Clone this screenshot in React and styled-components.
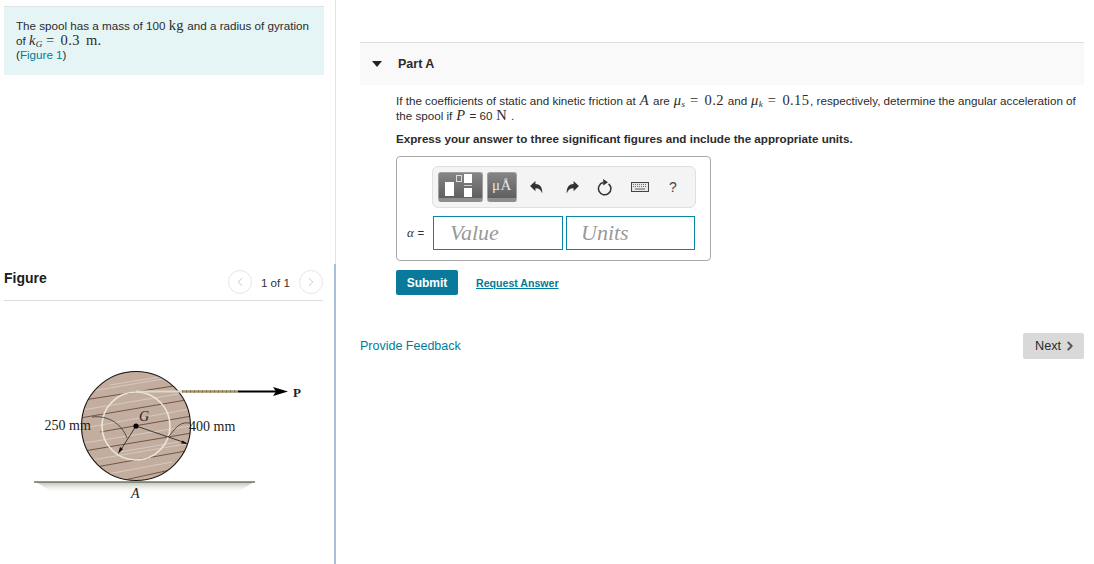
import React from "react";
import styled, { createGlobalStyle } from "styled-components";
import { ChevronLeft, ChevronRight } from "lucide-react";

const GlobalStyle = createGlobalStyle`
  html, body {
    margin: 0;
    padding: 0;
    background: #fff;
  }
  body {
    font-family: "Liberation Sans", Arial, sans-serif;
    color: #222;
  }
`;

const teal = "#007c9b";

const Page = styled.div`
  display: flex;
  width: 1094px;
  height: 564px;
  overflow: hidden;
`;

const LeftColumn = styled.div`
  width: 336px;
  display: flex;
  flex-direction: column;
`;

const IntroPane = styled.div`
  height: 264px;
  box-sizing: border-box;
  padding: 6px 11px 0 4px;
  border-right: 1px solid #dfe5ee;
`;

const Callout = styled.div`
  height: 69px;
  box-sizing: border-box;
  padding: 12px 12px 0;
  background: #e5f5f6;
  border-top: 1px solid #dde3e8;
  font-size: 11.65px;
  line-height: 14.5px;
  color: #2b2b2b;
  white-space: nowrap;
`;

const Link = styled.a`
  color: ${teal};
`;

const Math = styled.span`
  font-family: "Liberation Serif", "Times New Roman", serif;
  font-size: ${(p) => p.$size || 14.5}px;
  font-style: ${(p) => (p.$italic ? "italic" : "normal")};
  line-height: 0;
  letter-spacing: 0.4px;
  word-spacing: 2px;
  white-space: nowrap;
`;

const Sub = styled.span`
  font-size: 9px;
  font-style: italic;
  line-height: 0;
  vertical-align: -2px;
`;

const FigurePane = styled.div`
  flex: 1;
  padding: 0 11px 0 4px;
  border-right: 2px solid #a9bfd6;
`;

const FigureHeader = styled.div`
  height: 36px;
  display: flex;
  align-items: center;
  justify-content: space-between;
  border-bottom: 1px solid #d9dee3;
`;

const FigureTitle = styled.div`
  font-size: 14px;
  font-weight: bold;
  color: #1c1c1c;
  margin-top: -9px;
`;

const Pager = styled.div`
  display: flex;
  align-items: center;
  gap: 9px;
  font-size: 11.65px;
  color: #333;
`;

const PagerButton = styled.span`
  width: 22px;
  height: 22px;
  display: flex;
  align-items: center;
  justify-content: center;
  border: 1px solid #e6e6e6;
  border-radius: 50%;
  color: #b0b0b0;
`;

const Diagram = styled.svg`
  display: block;
  margin: 59px 0 0 16px;
`;

const RightColumn = styled.div`
  flex: 1;
  padding: 42px 10px 0 24px;
`;

const PartHeader = styled.div`
  height: 43px;
  box-sizing: border-box;
  display: flex;
  align-items: center;
  gap: 16px;
  padding: 0 0 1px 12px;
  background: #f9f9f9;
  border-top: 1px solid #dedede;
`;

const Caret = styled.span`
  width: 0;
  height: 0;
  border-left: 5px solid transparent;
  border-right: 5px solid transparent;
  border-top: 6px solid #222;
`;

const PartTitle = styled.div`
  font-size: 12.5px;
  font-weight: bold;
  color: #2a2a2a;
`;

const PartBody = styled.div`
  padding: 9px 0 0 36px;
`;

const Question = styled.p`
  margin: 0;
  font-size: 11.65px;
  line-height: 14.5px;
  color: #2b2b2b;
  white-space: nowrap;

  ${Math} {
    margin: 0 0.7px;
  }
`;

const Instruction = styled.p`
  margin: 9px 0 0;
  font-size: 11.65px;
  line-height: 14px;
  font-weight: bold;
  color: #2b2b2b;
`;

const AnswerBox = styled.div`
  width: 315px;
  height: 105px;
  box-sizing: border-box;
  margin-top: 10px;
  padding: 9px 10px 0 10px;
  border: 1px solid #aaa;
  border-radius: 4px;
`;

const Toolbar = styled.div`
  width: 264px;
  height: 42px;
  box-sizing: border-box;
  margin-left: 25px;
  padding: 5px 0 0 5px;
  display: flex;
  background: #f4f4f4;
  border: 1px solid #e0e0e0;
  border-radius: 6px;
`;

const ToolButton = styled.div`
  width: ${(p) => p.$width}px;
  height: 30px;
  margin-right: 4px;
  display: flex;
  align-items: center;
  justify-content: center;
  box-sizing: border-box;
  border: 1px solid #a0a0a0;
  border-bottom: 4px solid #8e8e8e;
  border-radius: 3px;
  background: linear-gradient(#858585, #5f5f5f);
  color: #e6e6e6;
  font-family: "Liberation Serif", serif;
  font-size: 15px;
  letter-spacing: 0.6px;
`;

const ToolIcon = styled.div`
  width: ${(p) => p.$width || 34}px;
  height: 30px;
  display: flex;
  align-items: center;
  justify-content: center;
  color: #444;
  font-size: 14px;
`;

const InputRow = styled.div`
  display: flex;
  align-items: center;
  gap: 3px;
  margin-top: 8px;
`;

const InputLabel = styled.div`
  flex: none;
  width: 23px;
  font-size: 11.5px;
  color: #333;
`;

const AnswerInput = styled.input`
  flex: none;
  width: ${(p) => p.$width}px;
  height: 34px;
  box-sizing: border-box;
  padding: 0 0 0 ${(p) => p.$pad}px;
  border: 1px solid #0a84a5;
  border-radius: 0;
  outline: none;
  font-family: "Liberation Serif", serif;
  font-style: italic;
  font-size: 22px;

  &::placeholder {
    color: #999;
    opacity: 1;
  }
`;

const Actions = styled.div`
  display: flex;
  align-items: center;
  gap: 18px;
  margin-top: 9px;
`;

const SubmitButton = styled.button`
  width: 62px;
  height: 25px;
  padding: 0;
  border: none;
  border-radius: 2px;
  background: #0a7a9c;
  color: #fff;
  font-family: inherit;
  font-size: 12px;
  font-weight: bold;
`;

const RequestLink = styled.a`
  color: ${teal};
  font-size: 10.6px;
  font-weight: bold;
  text-decoration: underline;
`;

const FooterRow = styled.div`
  display: flex;
  align-items: center;
  justify-content: space-between;
  margin-top: 38px;
`;

const FeedbackLink = styled.a`
  color: ${teal};
  font-size: 12.5px;
`;

const NextButton = styled.div`
  width: 61px;
  height: 26px;
  box-sizing: border-box;
  padding-left: 12px;
  display: flex;
  align-items: center;
  gap: 2px;
  background: #d9d9d9;
  border-radius: 2px;
  color: #2a2a2a;
  font-size: 12.7px;
`;

const SpoolDiagram = () => (
  <Diagram width="290" height="150" viewBox="20 360 290 150">
    <defs>
      <clipPath id="wheel">
        <circle cx="136" cy="426" r="54.5" />
      </clipPath>
      <linearGradient id="shadow" x1="0" y1="0" x2="0" y2="1">
        <stop offset="0" stopColor="#a3aa98" stopOpacity="0.75" />
        <stop offset="1" stopColor="#e6e9e0" stopOpacity="0" />
      </linearGradient>
    </defs>

    <path d="M36 482 H254 L238 492 H52 Z" fill="url(#shadow)" />
    <circle cx="136" cy="426" r="54.5" fill="#c4ad9f" />

    <g clipPath="url(#wheel)">
      <g stroke="#dbcec4" strokeWidth="1.2" fill="none" opacity="0.85">
        <path d="M86 392 L180 376" />
        <path d="M82 410 L190 392" />
        <path d="M84 428 L190 409" />
        <path d="M84 443 L190 426" />
        <path d="M92 460 L186 444" />
        <path d="M108 474 L172 462" />
        <path d="M110 385 L165 376" />
        <path d="M120 452 L178 442" />
      </g>
      <g stroke="#5a3f30" strokeWidth="0.8" fill="none">
        <path d="M100 377 L156 367" />
        <path d="M84 400 L186 384" />
        <path d="M80 418 L192 399" />
        <path d="M100 432 L192 416" />
        <path d="M84 451 L192 433" />
        <path d="M96 467 L186 451" />
        <path d="M120 481 L170 470" />
      </g>
    </g>

    <circle cx="136" cy="426" r="54.5" fill="none" stroke="#1d1713" strokeWidth="1.1" />
    <circle cx="136" cy="426" r="34" fill="none" stroke="#ebe8da" strokeWidth="1.6" />

    <path d="M136 391.5 H182" stroke="#ded9c8" strokeWidth="2" />
    <path d="M182 391.5 H238" stroke="#a2966c" strokeWidth="2.4" />
    <path d="M182 391.5 H238" stroke="#6c6140" strokeWidth="2.4" strokeDasharray="1 3" opacity="0.6" />
    <path d="M238 391.5 H277" stroke="#000" strokeWidth="1.8" />
    <path d="M288 391.5 L273 387 L276 391.5 L273 396 Z" fill="#000" />

    <path d="M92 417 C108 415 122 424 127 438" fill="none" stroke="#222" strokeWidth="0.7" />
    <path d="M190 423 C177 421 174 432 168 437" fill="none" stroke="#222" strokeWidth="0.7" />
    <path d="M136 426 L120 451" stroke="#1a1a1a" strokeWidth="0.8" />
    <path d="M118 454 L120 447 L123 449 Z" fill="#111" />
    <path d="M136 426 L186 443" stroke="#1a1a1a" strokeWidth="0.8" />
    <path d="M188 444 L181 443.5 L182.5 440.5 Z" fill="#111" />
    <circle cx="136" cy="426" r="2.6" fill="#000" />

    <path d="M34 482 H255" stroke="#6e7464" strokeWidth="1.6" />

    <g fontFamily="'Liberation Serif', serif" fill="#222">
      <text x="44.5" y="430" fontSize="14">250 mm</text>
      <text x="189" y="431" fontSize="14">400 mm</text>
      <text x="139" y="421" fontSize="14" fontStyle="italic">G</text>
      <text x="131" y="498" fontSize="14" fontStyle="italic">A</text>
      <text x="293" y="397" fontSize="13" fontWeight="bold">P</text>
    </g>
  </Diagram>
);

const TemplateIcon = () => (
  <svg width="36" height="24" viewBox="0 0 36 24">
    <rect x="2" y="8" width="9" height="14" fill="#fff" />
    <rect x="13.5" y="1.5" width="5" height="6" fill="none" stroke="#ddd" />
    <rect x="21" y="0" width="8" height="9" fill="#fff" />
    <rect x="21" y="11" width="8" height="1" fill="#ccc" />
    <rect x="21" y="14" width="8" height="9" fill="#fff" />
  </svg>
);

const UndoIcon = () => (
  <svg width="15" height="15" viewBox="0 0 14 14">
    <path d="M1 5.5 L6 1 V3.8 C10 3.8 12.6 6.4 12.4 12.6 C11.2 9.4 9.4 7.8 6 7.8 V10.4 Z" fill="#333" />
  </svg>
);

const RedoIcon = () => (
  <svg width="15" height="15" viewBox="0 0 14 14">
    <path d="M13 5.5 L8 1 V3.8 C4 3.8 1.4 6.4 1.6 12.6 C2.8 9.4 4.6 7.8 8 7.8 V10.4 Z" fill="#333" />
  </svg>
);

const ResetIcon = () => (
  <svg width="16" height="18" viewBox="0 0 16 18">
    <path d="M11.6 5.8 A6.2 6.2 0 1 1 6.2 4.6" fill="none" stroke="#333" strokeWidth="1.5" />
    <path d="M6.2 1 L11 4.2 L6.2 7.4 Z" fill="#333" />
  </svg>
);

const KeyboardIcon = () => (
  <svg width="18" height="10" viewBox="0 0 18 10">
    <rect x="0.5" y="0.5" width="17" height="9" fill="#e8e8e8" stroke="#444" />
    <path d="M2 2.5 H16 M2 4.5 H16" stroke="#777" strokeWidth="1" strokeDasharray="1 1" />
    <path d="M4 7 H14" stroke="#777" strokeWidth="1.2" />
  </svg>
);

const App = () => {
  return (
    <Page>
      <GlobalStyle />
      <LeftColumn>
        <IntroPane>
          <Callout>
            The spool has a mass of 100 <Math>kg</Math> and a radius of gyration
            <br />
            of <Math $italic>k<Sub>G</Sub></Math> <Math>= 0.3 m.</Math>
            <br />
            (<Link>Figure 1</Link>)
          </Callout>
        </IntroPane>
        <FigurePane>
          <FigureHeader>
            <FigureTitle>Figure</FigureTitle>
            <Pager>
              <PagerButton>
                <ChevronLeft size={14} strokeWidth={1.2} />
              </PagerButton>
              1 of 1
              <PagerButton>
                <ChevronRight size={14} strokeWidth={1.2} />
              </PagerButton>
            </Pager>
          </FigureHeader>
          <SpoolDiagram />
        </FigurePane>
      </LeftColumn>

      <RightColumn>
        <PartHeader>
          <Caret />
          <PartTitle>Part A</PartTitle>
        </PartHeader>
        <PartBody>
          <Question>
            If the coefficients of static and kinetic friction at <Math $italic>A</Math> are{" "}
            <Math $italic>μ<Sub>s</Sub></Math> <Math>= 0.2</Math> and{" "}
            <Math $italic>μ<Sub>k</Sub></Math> <Math>= 0.15</Math>, respectively, determine the
            angular acceleration of
            <br />
            the spool if <Math $italic>P</Math> = 60 <Math>N</Math> .
          </Question>
          <Instruction>Express your answer to three significant figures and include the appropriate units.</Instruction>
          <AnswerBox>
            <Toolbar>
              <ToolButton $width={45}>
                <TemplateIcon />
              </ToolButton>
              <ToolButton $width={30}>μÅ</ToolButton>
              <ToolIcon $width={30}><UndoIcon /></ToolIcon>
              <ToolIcon $width={42}><RedoIcon /></ToolIcon>
              <ToolIcon $width={24}><ResetIcon /></ToolIcon>
              <ToolIcon $width={46}><KeyboardIcon /></ToolIcon>
              <ToolIcon $width={20}>?</ToolIcon>
            </Toolbar>
            <InputRow>
              <InputLabel><Math $size={13} $italic>α</Math> =</InputLabel>
              <AnswerInput $width={130} $pad={16} placeholder="Value" />
              <AnswerInput $width={129} $pad={14} placeholder="Units" />
            </InputRow>
          </AnswerBox>
          <Actions>
            <SubmitButton>Submit</SubmitButton>
            <RequestLink>Request Answer</RequestLink>
          </Actions>
        </PartBody>
        <FooterRow>
          <FeedbackLink>Provide Feedback</FeedbackLink>
          <NextButton>
            Next
            <ChevronRight size={14} strokeWidth={3.2} color="#555" />
          </NextButton>
        </FooterRow>
      </RightColumn>
    </Page>
  );
};

export default App;
